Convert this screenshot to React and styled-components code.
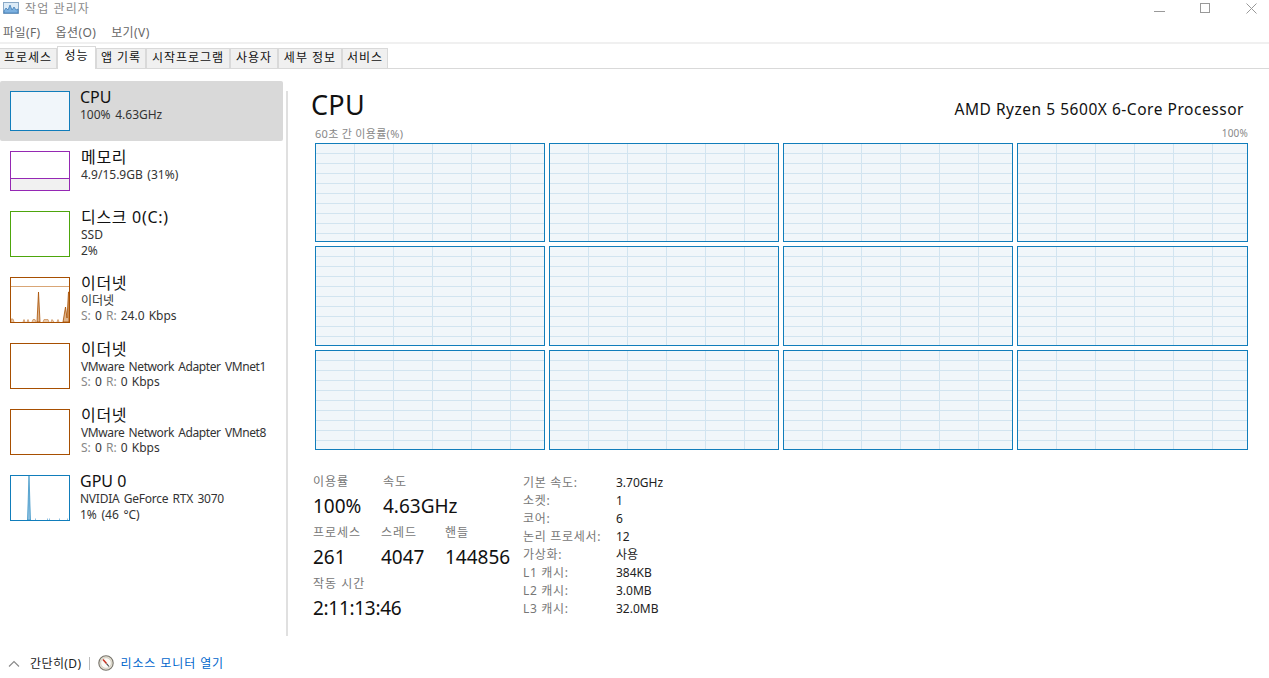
import React from 'react';
import styled, { createGlobalStyle } from 'styled-components';

const Global = createGlobalStyle`
  html, body { margin: 0; padding: 0; background: #fff; }
  body { font-family: "Noto Sans", "Noto Sans CJK KR", sans-serif; color: #000; overflow: hidden; }
`;

const Window = styled.div`
  width: 1269px;
  height: 678px;
  display: flex;
  flex-direction: column;
  overflow: hidden;
`;

const TitleBar = styled.div`
  height: 16px;
  display: flex;
  align-items: center;
  padding-left: 3px;
  font-size: 12px;
  color: #8a8a8a;
  letter-spacing: 1.1px;
  gap: 6px;
`;

const TitleControls = styled.div`
  margin-left: auto;
  display: flex;
  align-items: center;
  gap: 35px;
  padding-right: 12px;
`;

const MenuBar = styled.div`
  height: 28px;
  padding: 9px 0 0 3px;
  box-sizing: border-box;
  display: flex;
  gap: 15px;
  font-size: 12px;
  line-height: 16px;
  letter-spacing: 0.4px;
  color: #666;
  border-bottom: 2px solid #f0f0f0;
`;

const Tabs = styled.div`
  height: 25px;
  box-sizing: border-box;
  display: flex;
  align-items: flex-end;
  border-bottom: 1px solid #d9d9d9;
`;

const Tab = styled.div`
  box-sizing: border-box;
  width: ${p => p.$w}px;
  height: ${p => (p.$active ? 23 : 20)}px;
  margin-bottom: ${p => (p.$active ? -1 : 0)}px;
  background: ${p => (p.$active ? '#fff' : '#f0f0f0')};
  border: 1px solid #d9d9d9;
  border-bottom: 0;
  border-left-width: ${p => (p.$first ? 0 : 1)}px;
  font-size: 12px;
  line-height: 18px;
  text-align: center;
  white-space: nowrap;
  letter-spacing: 1px;
  color: #111;
`;

const Body = styled.div`
  flex: 1;
  display: flex;
  min-height: 0;
`;

const Sidebar = styled.div`
  width: 283px;
  padding-top: 12px;
  flex-shrink: 0;
`;

const SideRow = styled.div`
  box-sizing: border-box;
  height: ${p => (p.$short ? 60 : 66)}px;
  display: flex;
  padding: 10px 0 0 10px;
  gap: ${p => (p.$latin ? 10 : 11)}px;
  background: ${p => (p.$selected ? '#d9d9d9' : 'transparent')};
  border-radius: ${p => (p.$selected ? 2 : 0)}px;
`;

const Thumb = styled.div`
  box-sizing: border-box;
  position: relative;
  width: 60px;
  height: ${p => (p.$short ? 40 : 46)}px;
  border: 1px solid ${p => p.$color};
  background: ${p => p.$bg || '#fff'};
  flex-shrink: 0;
  overflow: hidden;
`;

const MemFill = styled.div`
  position: absolute;
  left: 0;
  right: 0;
  bottom: 0;
  height: 11px;
  background: #f1f1f1;
  border-top: 1px solid #9528b4;
`;

const SideText = styled.div`
  display: flex;
  flex-direction: column;
  margin-top: -3px;
`;

const SideName = styled.div`
  font-size: 16px;
  line-height: 19px;
  letter-spacing: ${p => (p.$latin ? 0 : 0.7)}px;
  color: #111;
`;

const SideLine = styled.div`
  font-size: 12px;
  line-height: 16px;
  letter-spacing: ${p => p.$ls || 0}px;
  word-spacing: 1.5px;
  color: #333;
  white-space: nowrap;
`;

const RateLine = styled(SideLine)`
  margin-top: -1px;
  word-spacing: 1px;
`;

const Dim = styled.span`
  color: #888;
`;

const Divider = styled.div`
  width: 2px;
  background: #e0e0e0;
  margin: 22px 24px 0 3px;
  height: 545px;
  flex-shrink: 0;
`;

const Main = styled.div`
  flex: 1;
  display: flex;
  flex-direction: column;
  padding: 19px 21px 0 0;
  margin-left: -1px;
  min-width: 0;
`;

const Header = styled.div`
  display: flex;
  align-items: flex-end;
  justify-content: space-between;
  height: 35px;
  padding-right: 4px;
`;

const Title = styled.div`
  font-size: 27px;
  line-height: 34px;
  letter-spacing: 0.3px;
  padding-bottom: 1px;
  color: #111;
`;

const Cpu = styled.div`
  font-size: 15.5px;
  line-height: 22px;
  letter-spacing: 0.53px;
  color: #111;
  padding-bottom: 3px;
`;

const ChartLabels = styled.div`
  display: flex;
  justify-content: space-between;
  align-items: center;
  margin: 3px 0 0 4px;
  font-size: 11px;
  line-height: 15px;
  color: #888;
  letter-spacing: 0.3px;
`;

const ChartMax = styled.span`
  font-size: 10px;
  letter-spacing: 0.2px;
`;

const CoreGrid = styled.div`
  display: grid;
  grid-template-columns: repeat(3, 230px) 1fr;
  grid-template-rows: 99px 100px 100px;
  gap: 4px;
  margin: 2px 0 0 4px;
`;

const Core = styled.div`
  box-sizing: border-box;
  border: 1px solid #117dbb;
  background-color: #f1f6fa;
  background-image:
    repeating-linear-gradient(to right, transparent 0 38px, #d2e4f0 38px 39px),
    repeating-linear-gradient(to bottom, transparent 0 9px, #d2e4f0 9px 10px);
`;

const Stats = styled.div`
  display: flex;
  margin: 25px 0 0 2px;
`;

const LiveStats = styled.div`
  width: 210px;
  display: flex;
  flex-direction: column;
  gap: 5px;
  margin-top: -1px;
`;

const StatRow = styled.div`
  display: flex;
`;

const Stat = styled.div`
  width: ${p => p.$w}px;
  flex-shrink: 0;
`;

const StatLabel = styled.div`
  font-size: 12px;
  line-height: 16px;
  letter-spacing: 1px;
  color: #777;
  white-space: nowrap;
`;

const StatValue = styled.div`
  font-size: 19px;
  line-height: 27px;
  margin-top: 3px;
  letter-spacing: ${p => p.$ls || 0}px;
  color: #111;
  white-space: nowrap;
`;

const Specs = styled.div`
  display: grid;
  grid-template-columns: 93px auto;
  grid-auto-rows: 18px;
  font-size: 12px;
  line-height: 18px;
  margin-top: -1px;
`;

const SpecKey = styled.div`
  color: #777;
  letter-spacing: 0.7px;
  white-space: nowrap;
`;

const SpecValue = styled.div`
  color: #222;
`;

const Footer = styled.div`
  height: 42px;
  display: flex;
  align-items: center;
  padding: 12px 0 0 8px;
  box-sizing: border-box;
  font-size: 12px;
`;

const Collapse = styled.span`
  margin-left: 10px;
  letter-spacing: 0.4px;
  color: #222;
`;

const Sep = styled.div`
  width: 1px;
  height: 13px;
  background: #bbb;
  margin: 0 8px;
`;

const MonitorLink = styled.span`
  color: #0066cc;
  margin-left: 6px;
  letter-spacing: 0.9px;
`;

const Glyph = styled.svg`
  display: block;
  flex-shrink: 0;
`;

const AppIcon = () => (
  <Glyph width="16" height="12" viewBox="0 0 16 12">
    <rect x="0.5" y="0.5" width="15" height="11" fill="#dcebf7" stroke="#8aa9c6" />
    <path d="M1 9 L3 6 L5 8 L7 3 L9 8 L11 5 L13 8 L15 7 V11 H1 Z" fill="#7db1e0" stroke="#3a77b0" strokeWidth="0.7" />
  </Glyph>
);

const Minimize = () => (
  <Glyph width="11" height="11" viewBox="0 0 11 11"><path d="M0 8.5 H11" stroke="#999" /></Glyph>
);
const Maximize = () => (
  <Glyph width="11" height="11" viewBox="0 0 11 11"><rect x="0.5" y="0.5" width="9" height="9" fill="none" stroke="#999" /></Glyph>
);
const CloseX = () => (
  <Glyph width="11" height="11" viewBox="0 0 11 11"><path d="M0.5 0.5 L10.5 10.5 M10.5 0.5 L0.5 10.5" stroke="#999" /></Glyph>
);

const EthernetSpark = () => (
  <Glyph width="58" height="44" viewBox="0 0 58 44">
    <path d="M0 8.5 H58" stroke="#d9a676" />
    <path d="M0 44 V41 L2 41 L3 44 M12 44 L13 41.5 L14 44 M16 44 L17 41.5 L18 44 M21 44 L22 41.5 L24 41.5 L25 44 M32 44 L33 41.5 L35 41.5 L37 41.5 L38 44 M40 44 L41 41.5 L43 44 M46 44 L47 41.5 L48 44" fill="#e9c9a9" stroke="#c98a52" strokeWidth="0.7" />
    <path d="M26 44 L27.5 14 L29 44 Z" fill="#e0b48a" stroke="#a74f01" strokeWidth="0.8" />
    <path d="M52 44 L54.5 29 L56 40 L57.5 14 L58 14 V44 Z" fill="#e0b48a" stroke="#a74f01" strokeWidth="0.8" />
  </Glyph>
);

const GpuSpark = () => (
  <Glyph width="58" height="44" viewBox="0 0 58 44">
    <path d="M16.5 44 L18 0 L19.5 44 Z" fill="#8fc0e0" stroke="#117dbb" strokeWidth="0.6" />
    <path d="M24.5 44 V42.5 M36.5 44 V42.5 M38.5 44 V42.5 M48.5 44 V42.5 M56.5 44 V42.5" stroke="#8fc0e0" />
  </Glyph>
);

const Chevron = () => (
  <Glyph width="12" height="7" viewBox="0 0 12 7"><path d="M1 6.5 L6 1.5 L11 6.5" fill="none" stroke="#888" strokeWidth="1.1" /></Glyph>
);

const GaugeIcon = () => (
  <Glyph width="16" height="16" viewBox="0 0 16 16">
    <circle cx="8" cy="8" r="7.2" fill="#e6e1d4" stroke="#76736a" strokeWidth="1.1" />
    <circle cx="8" cy="8" r="5.3" fill="#fbfaf6" stroke="#c4bfb1" strokeWidth="0.6" />
    <path d="M5 4.5 L8.5 8.6" stroke="#c8301f" strokeWidth="1.5" />
    <path d="M8.5 8.6 L11 11.5" stroke="#444" strokeWidth="1.1" />
  </Glyph>
);

const tabs = [
  { label: '프로세스', w: 57, first: true },
  { label: '성능', w: 39, active: true },
  { label: '앱 기록', w: 50 },
  { label: '시작프로그램', w: 84 },
  { label: '사용자', w: 48 },
  { label: '세부 정보', w: 64 },
  { label: '서비스', w: 46 },
];

const specs = [
  ['기본 속도:', '3.70GHz'],
  ['소켓:', '1'],
  ['코어:', '6'],
  ['논리 프로세서:', '12'],
  ['가상화:', '사용'],
  ['L1 캐시:', '384KB'],
  ['L2 캐시:', '3.0MB'],
  ['L3 캐시:', '32.0MB'],
];

const Rate = ({ r }) => (
  <RateLine><Dim>S:</Dim> 0 <Dim>R:</Dim> {r} Kbps</RateLine>
);

export default function App() {
  return (
    <Window>
      <Global />
      <TitleBar>
        <AppIcon />
        <span>작업 관리자</span>
        <TitleControls>
          <Minimize />
          <Maximize />
          <CloseX />
        </TitleControls>
      </TitleBar>
      <MenuBar>
        <span>파일(F)</span>
        <span>옵션(O)</span>
        <span>보기(V)</span>
      </MenuBar>
      <Tabs>
        {tabs.map(t => (
          <Tab key={t.label} $w={t.w} $active={t.active} $first={t.first}>{t.label}</Tab>
        ))}
      </Tabs>
      <Body>
        <Sidebar>
          <SideRow $short $selected $latin>
            <Thumb $short $color="#117dbb" $bg="#f1f6fa" />
            <SideText>
              <SideName $latin>CPU</SideName>
              <SideLine>100% 4.63GHz</SideLine>
            </SideText>
          </SideRow>
          <SideRow $short>
            <Thumb $short $color="#9528b4"><MemFill /></Thumb>
            <SideText>
              <SideName>메모리</SideName>
              <SideLine>4.9/15.9GB (31%)</SideLine>
            </SideText>
          </SideRow>
          <SideRow>
            <Thumb $color="#4da60c" />
            <SideText>
              <SideName>디스크 0(C:)</SideName>
              <SideLine>SSD</SideLine>
              <SideLine>2%</SideLine>
            </SideText>
          </SideRow>
          <SideRow>
            <Thumb $color="#a74f01"><EthernetSpark /></Thumb>
            <SideText>
              <SideName>이더넷</SideName>
              <SideLine>이더넷</SideLine>
              <Rate r="24.0" />
            </SideText>
          </SideRow>
          <SideRow>
            <Thumb $color="#a74f01" />
            <SideText>
              <SideName>이더넷</SideName>
              <SideLine $ls={-0.4}>VMware Network Adapter VMnet1</SideLine>
              <Rate r="0" />
            </SideText>
          </SideRow>
          <SideRow>
            <Thumb $color="#a74f01" />
            <SideText>
              <SideName>이더넷</SideName>
              <SideLine $ls={-0.4}>VMware Network Adapter VMnet8</SideLine>
              <Rate r="0" />
            </SideText>
          </SideRow>
          <SideRow $latin>
            <Thumb $color="#117dbb"><GpuSpark /></Thumb>
            <SideText>
              <SideName $latin>GPU 0</SideName>
              <SideLine $ls={-0.25}>NVIDIA GeForce RTX 3070</SideLine>
              <SideLine>1% (46 °C)</SideLine>
            </SideText>
          </SideRow>
        </Sidebar>
        <Divider />
        <Main>
          <Header>
            <Title>CPU</Title>
            <Cpu>AMD Ryzen 5 5600X 6-Core Processor</Cpu>
          </Header>
          <ChartLabels>
            <span>60초 간 이용률(%)</span>
            <ChartMax>100%</ChartMax>
          </ChartLabels>
          <CoreGrid>
            {Array.from({ length: 12 }, (_, i) => <Core key={i} />)}
          </CoreGrid>
          <Stats>
            <LiveStats>
              <StatRow>
                <Stat $w={70}><StatLabel>이용률</StatLabel><StatValue>100%</StatValue></Stat>
                <Stat $w={100}><StatLabel>속도</StatLabel><StatValue>4.63GHz</StatValue></Stat>
              </StatRow>
              <StatRow>
                <Stat $w={68}><StatLabel>프로세스</StatLabel><StatValue>261</StatValue></Stat>
                <Stat $w={64}><StatLabel>스레드</StatLabel><StatValue>4047</StatValue></Stat>
                <Stat $w={70}><StatLabel>핸들</StatLabel><StatValue>144856</StatValue></Stat>
              </StatRow>
              <Stat $w={100}><StatLabel>작동 시간</StatLabel><StatValue $ls={-0.3}>2:11:13:46</StatValue></Stat>
            </LiveStats>
            <Specs>
              {specs.map(([k, v]) => (
                <React.Fragment key={k}>
                  <SpecKey>{k}</SpecKey>
                  <SpecValue>{v}</SpecValue>
                </React.Fragment>
              ))}
            </Specs>
          </Stats>
        </Main>
      </Body>
      <Footer>
        <Chevron />
        <Collapse>간단히(D)</Collapse>
        <Sep />
        <GaugeIcon />
        <MonitorLink>리소스 모니터 열기</MonitorLink>
      </Footer>
    </Window>
  );
}
